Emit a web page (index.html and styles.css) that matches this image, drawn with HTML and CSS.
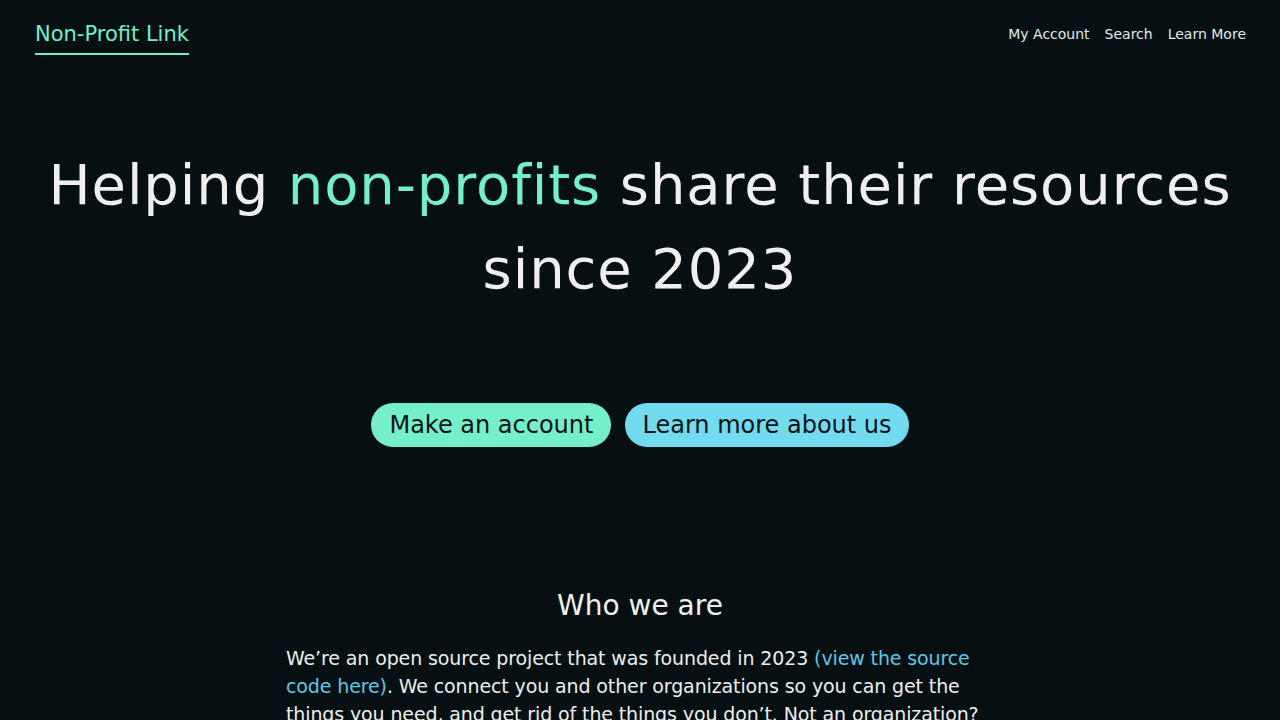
FILE: index.html
```html
<!DOCTYPE html>
<html lang="en">
<head>
<meta charset="utf-8">
<title>Non-Profit Link</title>
<link rel="stylesheet" href="styles.css">
</head>
<body>
<header class="topbar">
  <a class="logo" href="#">Non-Profit Link</a>
  <nav class="nav">
    <a href="#">My Account</a>
    <a href="#">Search</a>
    <a href="#">Learn More</a>
  </nav>
</header>
<main class="main">
  <h1 class="hero">Helping <span class="accent">non-profits</span> share their resources since 2023</h1>
  <div class="actions">
    <a class="btn btn-green" href="#">Make an account</a>
    <a class="btn btn-blue" href="#">Learn more about us</a>
  </div>
  <section class="about">
    <h2 class="about-title">Who we are</h2>
    <p class="about-text">We’re an open source project that was founded in 2023 <a class="link" href="#">(view the source code here)</a>. We connect you and other organizations so you can get the things you need, and get rid of the things you don’t. Not an organization? You can still help by donating what you don’t need.</p>
  </section>
</main>
</body>
</html>
```
FILE: styles.css
```css
html, body {
  margin: 0;
  padding: 0;
}
body {
  background: #061013;
  color: #eeeeee;
  font-family: "DejaVu Sans", "Open Sans", sans-serif;
}
a {
  text-decoration: none;
  color: inherit;
}
.topbar {
  display: flex;
  justify-content: space-between;
  align-items: flex-start;
  padding: 20px 34px 0 35px;
}
.logo {
  color: #74efc9;
  font-size: 21px;
  line-height: 28px;
  padding-bottom: 5px;
  border-bottom: 2px solid #74efc9;
}
.nav {
  display: flex;
  gap: 15px;
  font-size: 14px;
  line-height: 28px;
}
.nav a {
  color: #e2eaec;
}
.main {
  display: flex;
  flex-direction: column;
  align-items: center;
}
.hero {
  margin: 88px 0 0;
  font-size: 56px;
  font-weight: 400;
  line-height: 84px;
  letter-spacing: 0.9px;
  text-align: center;
  color: #efefef;
  max-width: 1230px;
}
.accent {
  color: #74efc9;
}
.actions {
  display: flex;
  gap: 14px;
  margin-top: 92px;
}
.btn {
  display: block;
  font-size: 24px;
  line-height: 36px;
  padding: 4px 17px;
  border-radius: 22px;
  color: #081216;
}
.btn-green {
  background: #74efc9;
  padding: 4px 18px;
}
.btn-blue {
  background: #72dbf0;
}
.about {
  width: 708px;
  margin-top: 138px;
}
.about-title {
  margin: 0;
  font-size: 28px;
  font-weight: 400;
  line-height: 42px;
  text-align: center;
  color: #f0f0f0;
}
.about-text {
  margin: 17px 0 0;
  font-size: 19px;
  line-height: 28px;
  letter-spacing: -0.12px;
  color: #eeeeee;
}
.link {
  color: #5ec9e3;
}
```
